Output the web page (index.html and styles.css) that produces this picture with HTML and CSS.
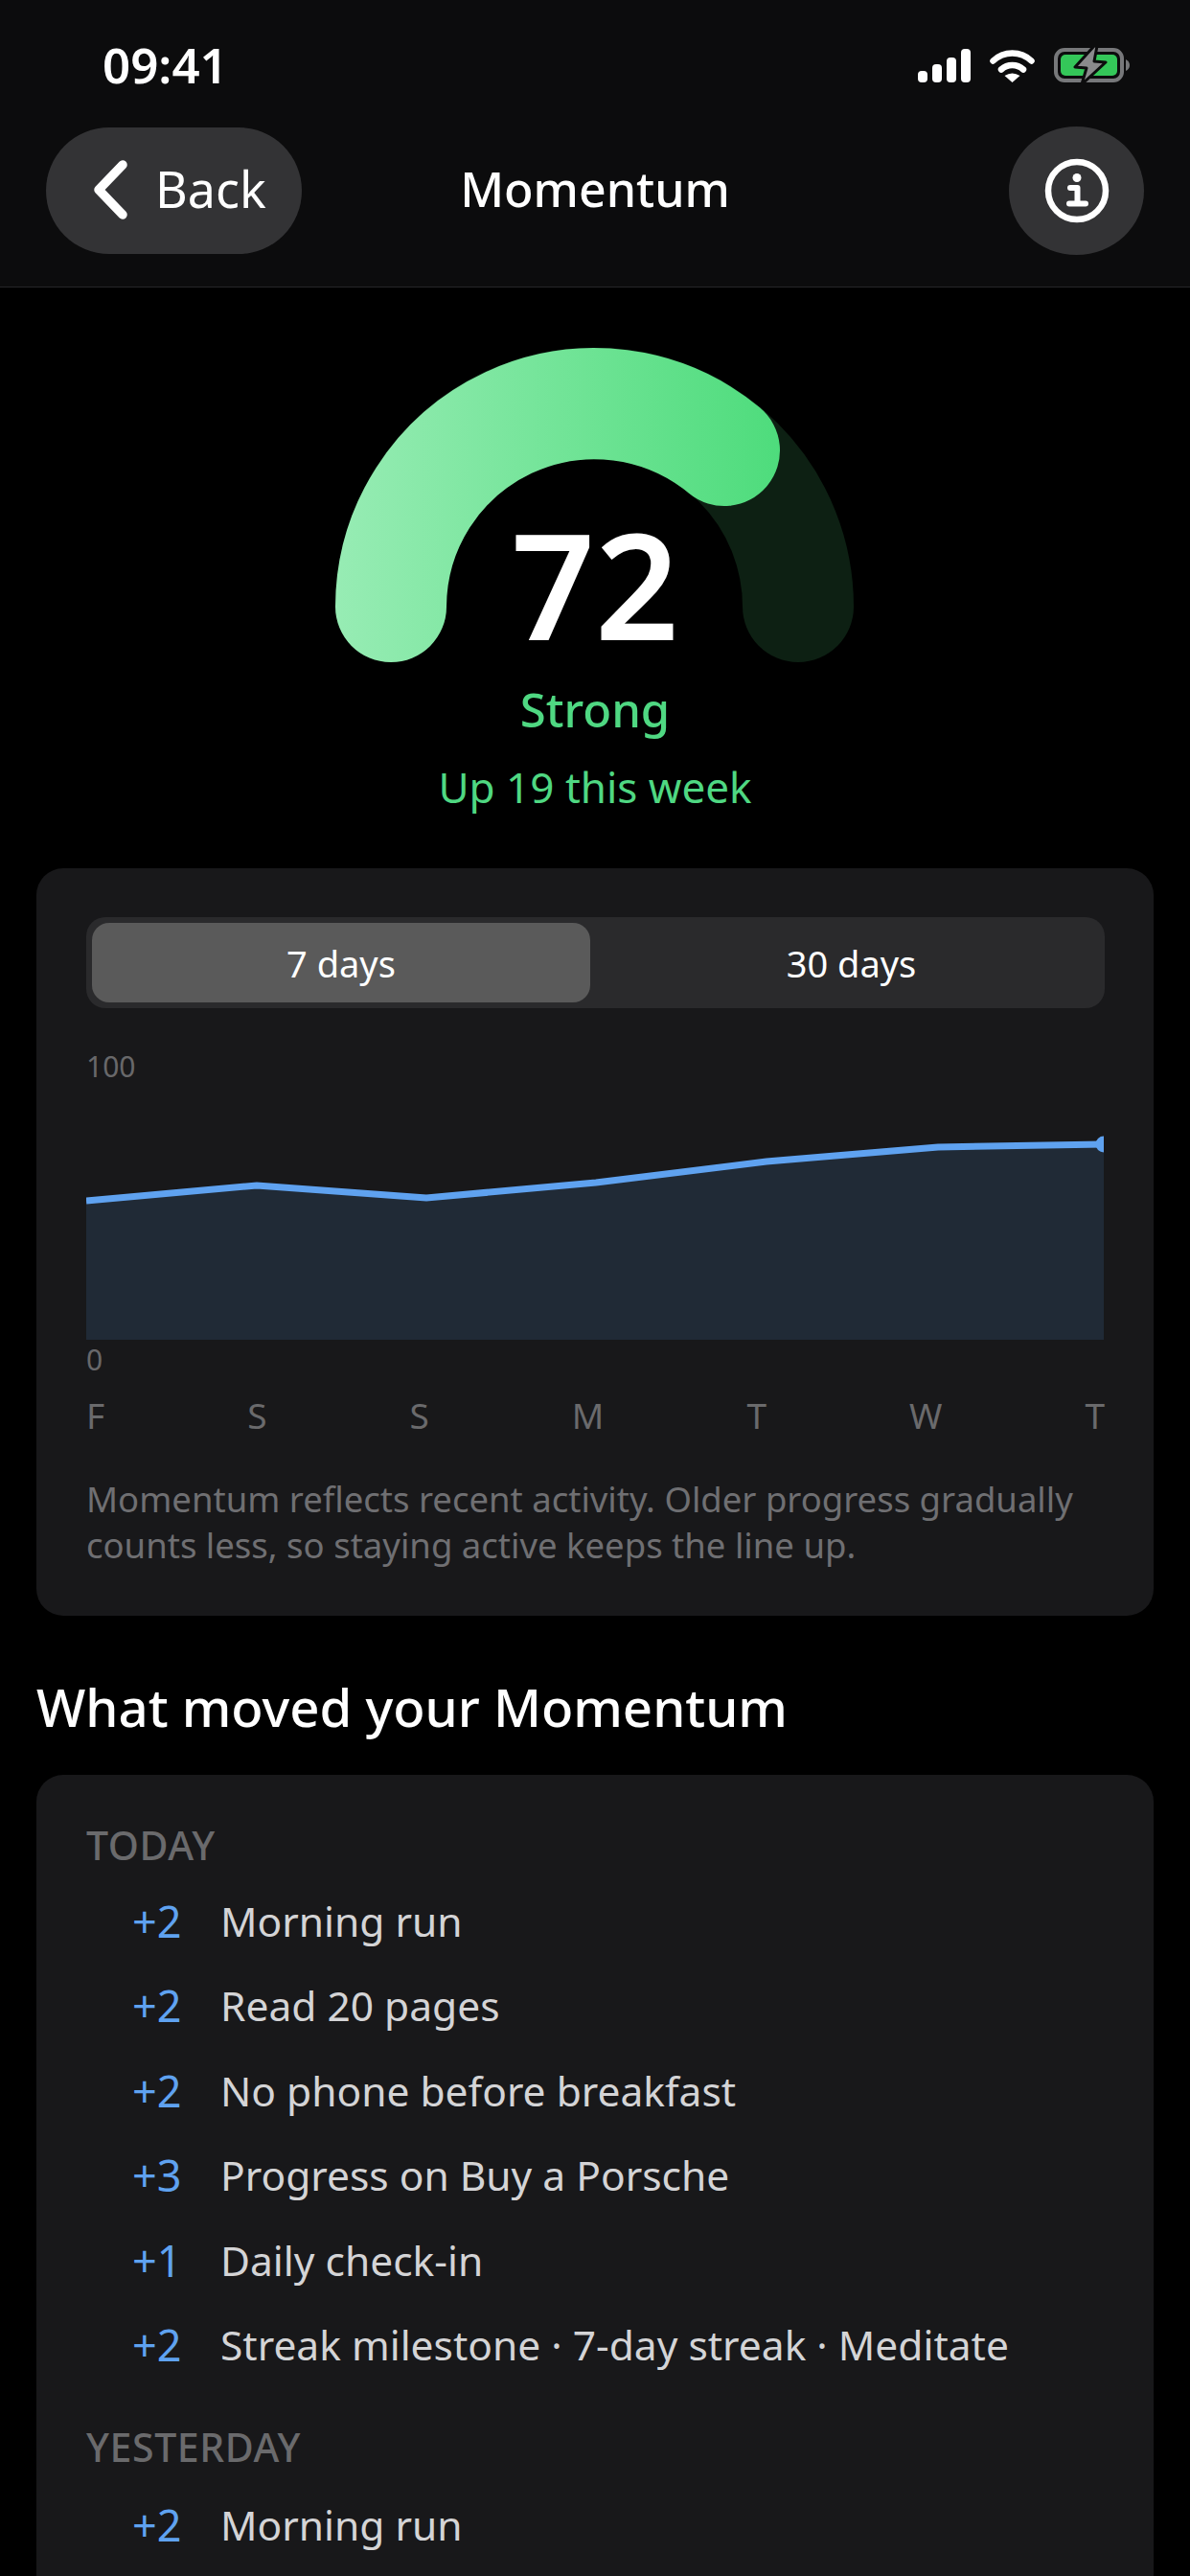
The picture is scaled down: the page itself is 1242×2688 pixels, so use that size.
FILE: index.html
```html
<!DOCTYPE html>
<html lang="en">
<head>
    <meta charset="UTF-8">
    <meta name="viewport" content="width=device-width, initial-scale=1.0">
    <title>Momentum</title>
    <link rel="stylesheet" href="styles.css">
</head>
<body>
    <div class="screen">
        <header class="top">
            <div class="status">
                <span class="time">09:41</span>
                <div class="status-icons">
                    <svg class="signal" width="55" height="35" viewBox="0 0 55 35">
                        <rect x="0" y="23" width="10" height="12" rx="4" fill="#fff"/>
                        <rect x="15" y="16" width="10" height="19" rx="4" fill="#fff"/>
                        <rect x="30" y="9" width="10" height="26" rx="4" fill="#fff"/>
                        <rect x="45" y="0" width="10" height="35" rx="4" fill="#fff"/>
                    </svg>
                    <svg class="wifi" width="47" height="35" viewBox="0 0 47 35">
                        <path d="M3.5 12.5 A29 29 0 0 1 43.5 12.5" fill="none" stroke="#fff" stroke-width="6.5" stroke-linecap="round"/>
                        <path d="M12 21.5 A17 17 0 0 1 35 21.5" fill="none" stroke="#fff" stroke-width="6.5" stroke-linecap="round"/>
                        <path d="M15.5 28 Q23.5 23 31.5 28 L23.5 35 Z" fill="#fff"/>
                    </svg>
                    <svg class="battery" width="80" height="40" viewBox="0 -1 80 40">
                        <rect x="2" y="3" width="69" height="32" rx="9" fill="none" stroke="#77787a" stroke-width="4"/>
                        <rect x="7" y="8" width="59" height="22" rx="5" fill="#34c759"/>
                        <path d="M75 13 Q79 15 79 19 Q79 23 75 25 Z" fill="#77787a"/>
                        <path d="M42 -1 L22 21 L34 22 L29 39 L54 16 L42 15 L45 -1 Z" fill="#8a8a8c" stroke="#0c0c0d" stroke-width="3" stroke-linejoin="round"/>
                    </svg>
                </div>
            </div>
            <nav class="nav">
                <button class="back">
                    <svg width="36" height="62" viewBox="0 0 36 62">
                        <path d="M31 5 L6 31 L31 57" fill="none" stroke="#fff" stroke-width="9.5" stroke-linecap="round" stroke-linejoin="round"/>
                    </svg>
                    <span>Back</span>
                </button>
                <h1 class="title">Momentum</h1>
                <button class="info">
                    <svg width="68" height="68" viewBox="0 0 68 68">
                        <circle cx="34" cy="34" r="30" fill="none" stroke="#fff" stroke-width="6.5"/>
                        <circle cx="34" cy="20.5" r="4.5" fill="#fff"/>
                        <path d="M27 31 H34.5 V47 M26 47.5 H43" fill="none" stroke="#fff" stroke-width="6" stroke-linecap="round" stroke-linejoin="round"/>
                    </svg>
                </button>
            </nav>
        </header>

        <section class="hero">
            <div class="gauge">
                <svg width="542" height="328" viewBox="0 0 542 328">
                    <defs>
                        <linearGradient id="gaugeFill" gradientUnits="userSpaceOnUse" x1="0" y1="0" x2="464" y2="0">
                            <stop offset="0" stop-color="#97ecb4"/>
                            <stop offset="1" stop-color="#4edc7c"/>
                        </linearGradient>
                    </defs>
                    <path d="M58 270 A212.5 212.5 0 0 1 483 270" fill="none" stroke="#0d2013" stroke-width="116" stroke-linecap="round"/>
                    <path d="M58 270 A212.5 212.5 0 0 1 406 107" fill="none" stroke="url(#gaugeFill)" stroke-width="116" stroke-linecap="round"/>
                </svg>
                <div class="score">72</div>
            </div>
            <div class="grade">Strong</div>
            <div class="delta">Up 19 this week</div>
        </section>

        <section class="card chart-card">
            <div class="seg">
                <div class="seg-item on">7 days</div>
                <div class="seg-item">30 days</div>
            </div>
            <div class="axis axis-top">100</div>
            <svg class="chart" width="1062" height="266" viewBox="0 0 1062 266">
                <path d="M0 121 L178 105 L355 118 L532 102 L710 80 L889 65 L1062 62 V266 H0 Z" fill="#202a36"/>
                <path d="M0 121 L178 105 L355 118 L532 102 L710 80 L889 65 L1062 62" fill="none" stroke="#5fa2f0" stroke-width="7"/>
                <circle cx="1062" cy="62" r="8.5" fill="#5fa2f0"/>
            </svg>
            <div class="axis axis-bottom">0</div>
            <div class="days">
                <span>F</span><span>S</span><span>S</span><span>M</span><span>T</span><span>W</span><span>T</span>
            </div>
            <p class="note">Momentum reflects recent activity. Older progress gradually counts less, so staying active keeps the line up.</p>
        </section>

        <h2 class="section-title">What moved your Momentum</h2>

        <section class="card moves">
            <div class="day-label">TODAY</div>
            <div class="rows">
                <div class="row"><span class="amount">+2</span><span>Morning run</span></div>
                <div class="row"><span class="amount">+2</span><span>Read 20 pages</span></div>
                <div class="row"><span class="amount">+2</span><span>No phone before breakfast</span></div>
                <div class="row"><span class="amount">+3</span><span>Progress on Buy a Porsche</span></div>
                <div class="row"><span class="amount">+1</span><span>Daily check-in</span></div>
                <div class="row"><span class="amount">+2</span><span>Streak milestone · 7-day streak · Meditate</span></div>
            </div>
            <div class="day-label day-label-next">YESTERDAY</div>
            <div class="rows rows-next">
                <div class="row"><span class="amount">+2</span><span>Morning run</span></div>
            </div>
        </section>
    </div>
</body>
</html>
```

FILE: styles.css
```css
* {
    margin: 0;
    padding: 0;
    box-sizing: border-box;
}

body {
    background: #000;
    font-family: "Noto Sans", "Open Sans", sans-serif;
    color: #fff;
}

.screen {
    width: 1242px;
    height: 2688px;
    overflow: hidden;
    background: #000;
}

/* header */
.top {
    height: 300px;
    background: #0c0c0d;
    border-bottom: 1px solid #262628;
    padding: 0 48px;
}

.status {
    height: 132px;
    display: flex;
    justify-content: space-between;
    align-items: flex-start;
    padding: 0 14px 0 59px;
}

.time {
    font-size: 51px;
    font-weight: 600;
    line-height: 68px;
    margin-top: 33px;
}

.status-icons {
    display: flex;
    align-items: center;
    gap: 20px;
    margin-top: 48px;
}

.nav {
    display: grid;
    grid-template-columns: 1fr auto 1fr;
    align-items: center;
    height: 132px;
}

.back {
    width: 267px;
    height: 132px;
    border: none;
    border-radius: 66px;
    background: #333335;
    color: #fff;
    display: flex;
    align-items: center;
    gap: 29px;
    padding: 0 0 5px 49px;
    font-family: inherit;
    font-size: 52px;
}

.back svg {
    flex: none;
    margin-top: 3px;
}

.title {
    font-size: 50px;
    font-weight: 500;
    line-height: 70px;
    margin-top: -5px;
}

.info {
    justify-self: end;
    width: 141px;
    height: 134px;
    border: none;
    border-radius: 50%;
    background: #333335;
    display: flex;
    align-items: center;
    justify-content: center;
}

/* gauge */
.hero {
    display: flex;
    flex-direction: column;
    align-items: center;
    padding-top: 63px;
}

.gauge {
    position: relative;
    height: 328px;
}

.gauge svg {
    display: block;
}

.score {
    position: absolute;
    left: 0;
    right: 0;
    top: 176px;
    text-align: center;
    font-size: 153px;
    font-weight: 600;
    line-height: 140px;
}

.grade {
    margin-top: 19px;
    font-size: 49px;
    font-weight: 500;
    line-height: 60px;
    color: #4fd882;
}

.delta {
    margin-top: 23px;
    margin-bottom: 1px;
    font-size: 44px;
    line-height: 56px;
    color: #4fd882;
}

/* cards */
.card {
    margin: 0 38px;
    background: #18181a;
    border-radius: 28px;
}

.chart-card {
    margin-top: 56px;
    padding: 51px 51px 50px 52px;
}

.seg {
    height: 95px;
    display: flex;
    padding: 6px;
    background: #2a2a2c;
    border-radius: 20px;
}

.seg-item {
    flex: 1;
    display: flex;
    align-items: center;
    justify-content: center;
    font-size: 38px;
    padding-left: 14px;
}

.seg-item.on {
    flex: 0 0 520px;
    padding-left: 0;
    background: #5a5a5a;
    border-radius: 18px;
}

.axis {
    font-size: 30px;
    line-height: 36px;
    color: #68686a;
}

.axis-top {
    margin-top: 43px;
    margin-bottom: 1px;
}

.axis-bottom {
    margin-top: 3px;
}

.chart {
    display: block;
}

.days {
    display: flex;
    justify-content: space-between;
    margin-top: 18px;
    font-size: 37px;
    line-height: 44px;
    color: #6a6a6c;
}

.note {
    margin-top: 41px;
    font-size: 36.5px;
    line-height: 48px;
    color: #6f6f72;
}

.section-title {
    margin: 60px 38px 36px;
    font-size: 54.5px;
    font-weight: 500;
    line-height: 70px;
}

/* list */
.moves {
    padding: 48px 52px 0;
    height: 900px;
}

.day-label {
    font-size: 41px;
    font-weight: 500;
    letter-spacing: 0.6px;
    line-height: 50px;
    color: #6a6a6c;
}

.day-label-next {
    margin-top: 37px;
}

.rows {
    margin-top: 10px;
}

.rows-next {
    margin-top: 12px;
}

.row {
    display: flex;
    align-items: center;
    height: 88.5px;
    padding-left: 48px;
    font-size: 42.5px;
    color: #d4d4d6;
}

.amount {
    flex: none;
    width: 92px;
    font-size: 45px;
    color: #5fa2f0;
}
```
